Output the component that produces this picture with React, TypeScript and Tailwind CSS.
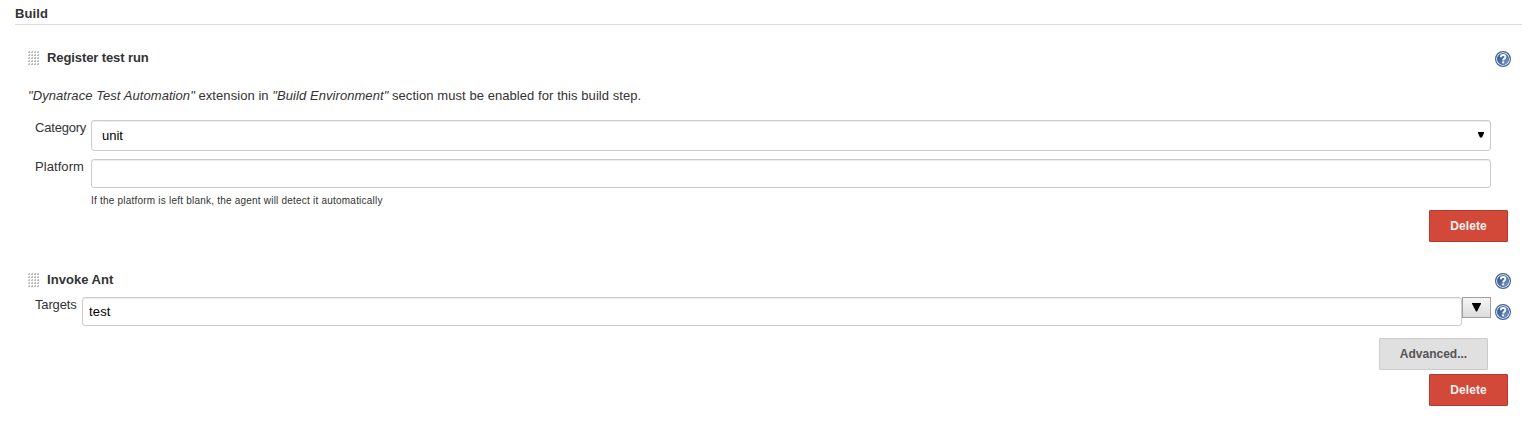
import type { ReactNode } from "react";

const gripRows = [0, 3, 6, 9, 12];
const gripCols = [0, 3, 6, 9];

function Grip() {
  return (
    <svg width="12" height="15" viewBox="0 0 12 15" shapeRendering="crispEdges" className="shrink-0">
      {gripRows.map((y) =>
        gripCols.map((x) => (
          <g key={`${x}-${y}`}>
            <rect x={x} y={y + 1} width="2" height="1" fill="#bdbdbd" />
            <rect x={x + 1} y={y} width="1" height="1" fill="#bdbdbd" />
            <rect x={x} y={y} width="1" height="1" fill="#e8e8e8" />
          </g>
        ))
      )}
    </svg>
  );
}

function Help() {
  return (
    <svg width="16" height="16" viewBox="0 0 16 16" className="block shrink-0" role="img">
      <defs>
        <linearGradient id="helpFill" x1="0" y1="0" x2="1" y2="1">
          <stop offset="0" stopColor="#2a5190" />
          <stop offset="0.5" stopColor="#4a70a9" />
          <stop offset="1" stopColor="#8eaad0" />
        </linearGradient>
      </defs>
      <circle cx="8" cy="8" r="7.4" fill="#fff" stroke="#3d6299" strokeWidth="1.2" />
      <circle cx="8" cy="8" r="5.6" fill="url(#helpFill)" stroke="#34588f" strokeWidth="0.7" />
      <path d="M5.8 6.3C5.8 4.7 6.8 4 8.1 4C9.6 4 10.4 4.8 10.4 5.9C10.4 7.5 8.2 7.6 8.2 9.5" fill="none" stroke="#fff" strokeWidth="1.8" />
      <rect x="7.2" y="10.4" width="1.9" height="1.9" fill="#fff" />
    </svg>
  );
}

function StepHeader({ title, className }: { title: string; className: string }) {
  return (
    <div className="flex h-4 items-start pr-[25px] pl-7">
      <Grip />
      <h3 className={`-mt-px ml-[7px] flex-1 text-[13px] leading-[15px] font-bold ${className}`}>{title}</h3>
      <Help />
    </div>
  );
}

function DeleteButton() {
  return (
    <button className="h-8 w-[79px] rounded-[1px] border border-[#b93a2c] bg-[#d24939] text-[12px] font-bold tracking-[0.05px] text-[#f5f1f1]">
      Delete
    </button>
  );
}

function Label({ className, children }: { className: string; children: ReactNode }) {
  return <label className={`shrink-0 text-[13px] leading-[15px] ${className}`}>{children}</label>;
}

const field =
  "rounded-[3px] border border-[#ccc] bg-white text-[13px] text-black shadow-[inset_0_1px_1px_rgba(0,0,0,0.075)] outline-none";

export default function App() {
  return (
    <main className="h-[432px] w-full overflow-hidden bg-white font-['Liberation_Sans',Arial,sans-serif] text-[13px] text-[#333]">
      <h2 className="mr-3.5 ml-[15px] h-[25px] border-b border-[#ddd] pt-1.5 text-[13px] leading-[15px] font-bold tracking-[0.1px]">
        Build
      </h2>

      <section className="pt-[26px]">
        <StepHeader title="Register test run" className="tracking-[-0.1px]" />
        <p className="mt-[21px] pl-7 leading-[15px] tracking-[0.065px]">
          <i>"Dynatrace Test Automation"</i> extension in <i>"Build Environment"</i> section must be enabled for this build step.
        </p>
        <div className="mt-[17px] flex items-start pr-[45px] pl-[35px]">
          <Label className="w-14 tracking-[-0.2px]">Category</Label>
          <div className={`${field} flex h-[31px] flex-1 items-center justify-between pr-[6px] pl-2.5`}>
            <span>unit</span>
            <svg width="6" height="6" viewBox="0 0 6 6" className="-mt-px">
              <path d="M0 0H6V1L4 5.5H2L0 1Z" fill="#000" />
            </svg>
          </div>
        </div>
        <div className="mt-2 flex items-start pr-[45px] pl-[35px]">
          <Label className="w-14 tracking-[0.07px]">Platform</Label>
          <input className={`${field} h-[29px] min-w-0 flex-1 px-1.5`} />
        </div>
        <p className="mt-[7px] pl-[91px] text-[10px] leading-[12px] tracking-[0.215px]">
          If the platform is left blank, the agent will detect it automatically
        </p>
        <div className="mt-[3px] flex justify-end pr-7">
          <DeleteButton />
        </div>
      </section>

      <section className="pt-[31px]">
        <StepHeader title="Invoke Ant" className="tracking-[0.04px]" />
        <div className="mt-2 flex items-start pr-[25px] pl-[35px]">
          <Label className="w-[47px] tracking-[-0.15px]">Targets</Label>
          <input className={`${field} h-[29px] min-w-0 flex-1 px-1.5 tracking-[0.15px]`} defaultValue="test" />
          <button className="flex h-[21px] w-[29px] items-center justify-center border border-[#a0a0a0] bg-linear-to-b from-[#f5f5f5] to-[#dddddd]">
            <svg width="9" height="9" viewBox="0 0 9 9">
              <path d="M0 0H9V0.8L5 8.5H4L0 0.8Z" fill="#000" />
            </svg>
          </button>
          <div className="mt-[7px] ml-1">
            <Help />
          </div>
        </div>
        <div className="mt-3 flex justify-end pr-12">
          <button className="h-8 w-[109px] rounded-[1px] border border-[#ccc] bg-[#e0e0e0] text-[12px] font-bold text-[#555]">
            Advanced...
          </button>
        </div>
        <div className="mt-1 flex justify-end pr-7">
          <DeleteButton />
        </div>
      </section>
    </main>
  );
}
